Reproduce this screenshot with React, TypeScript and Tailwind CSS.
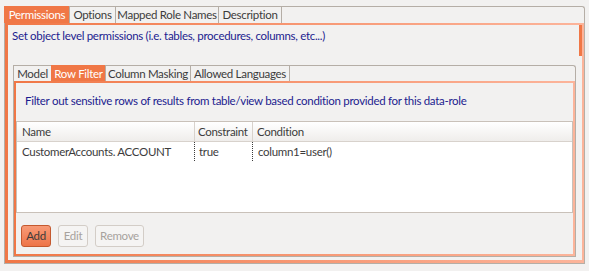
const font = { fontFamily: "Lato, 'Liberation Sans', sans-serif" };

const outerTabs = [
  { label: "Permissions", width: "w-[65px]", active: true },
  { label: "Options", width: "w-[46px]", active: false },
  { label: "Mapped Role Names", width: "w-[103px]", active: false },
  { label: "Description", width: "w-[63px]", active: false },
];

const innerTabs = [
  { label: "Model", width: "w-[38px]", active: false },
  { label: "Row Filter", width: "w-[54px]", active: true },
  { label: "Column Masking", width: "w-[85px]", active: false },
  { label: "Allowed Languages", width: "w-[99px]", active: false },
];

type Tab = { label: string; width: string; active: boolean };

function TabStrip({ tabs, height }: { tabs: Tab[]; height: string }) {
  return (
    <div className={`flex ${height}`}>
      {tabs.map((t) => (
        <div
          key={t.label}
          className={`${t.width} flex items-center justify-center whitespace-nowrap border-l border-t border-[#b5aea6] text-[11.5px] leading-none ${
            t.active ? "bg-[#f07746] text-white border-[#f07746]" : "text-[#3c3c3c]"
          }`}
        >
          {t.label}
        </div>
      ))}
      <div className="flex-1 rounded-tr-[3px] border-l border-r border-t border-[#b5aea6]" />
    </div>
  );
}

function OrangeFrame({ children, pad }: { children: React.ReactNode; pad: string }) {
  return (
    <div className="flex flex-1 flex-col border-b border-l border-r border-[#b5aea6]">
      <div className={`flex flex-1 flex-col bg-gradient-to-r from-[#f07746] to-[#fcb49a] ${pad}`}>
        <div className="flex flex-1 flex-col bg-[#f2f1f0]">{children}</div>
      </div>
    </div>
  );
}

export default function App() {
  return (
    <div className="h-[271px] w-[589px] bg-[#f2f1f0] pt-[6px] pl-[4px] text-[11.5px] tracking-[-0.3px]" style={font}>
      <div className="flex h-[258px] w-[581px] flex-col">
        <TabStrip tabs={outerTabs} height="h-[17px]" />
        <OrangeFrame pad="pl-[3px] pt-[2px] pr-[2px] pb-[3px]">
          <div className="flex flex-1">
            <div className="flex flex-1 flex-col">
              <div className="whitespace-nowrap pl-[4px] pt-[3px] leading-[15px] text-[#1c1c8f]">
                Set object level permissions (i.e. tables, procedures, columns, etc...)
              </div>
              <div className="ml-[5px] mt-[22px] flex h-[192px] w-[563px] flex-col">
                <TabStrip tabs={innerTabs} height="h-[16px]" />
                <OrangeFrame pad="pl-[2px] pt-[2px] pr-[2px] pb-[2px]">
                  <div className="whitespace-nowrap pl-[9px] pt-[10px] leading-[15px] text-[#1c1c8f]">
                    Filter out sensitive rows of results from table/view based condition provided for this data-role
                  </div>
                  <div className="mt-[13px] flex h-[92px] flex-col border border-[#c9c1b9] bg-white text-[#3c3c3c]">
                    <div className="flex h-[20px] border-b border-[#d8d2cc] bg-gradient-to-b from-white to-[#efedeb]">
                      <div className="flex w-[177px] items-center pl-[5px]">Name</div>
                      <div className="flex w-[58px] items-center border-l border-[#d8d2cc] pl-[3px]">Constraint</div>
                      <div className="flex flex-1 items-center border-l border-[#d8d2cc] pl-[4px]">Condition</div>
                    </div>
                    <div className="flex h-[19px]">
                      <div className="flex w-[177px] items-center pl-[5px]">CustomerAccounts. ACCOUNT</div>
                      <div className="flex w-[58px] items-center border-l border-dotted border-[#3c3c3c] pl-[4px]">true</div>
                      <div className="flex flex-1 items-center border-l border-dotted border-[#3c3c3c] pl-[5px]">column1=user()</div>
                    </div>
                  </div>
                  <div className="ml-[5px] mt-[12px] flex gap-[7px]">
                    <div className="flex h-[22px] w-[30px] items-center justify-center rounded-[3px] border border-[#c4592f] bg-gradient-to-b from-[#f79a76] to-[#ee7448] text-[#3c3c3c]">
                      Add
                    </div>
                    <div className="flex h-[22px] w-[30px] items-center justify-center rounded-[3px] border border-[#d3cdc7] bg-[#f5f4f3] text-[#a7a29d]">
                      Edit
                    </div>
                    <div className="flex h-[22px] w-[49px] items-center justify-center rounded-[3px] border border-[#d3cdc7] bg-[#f5f4f3] text-[#a7a29d]">
                      Remove
                    </div>
                  </div>
                </OrangeFrame>
              </div>
            </div>
            <div className="w-[3px]">
              <div className="h-[31px] bg-[#f07746]" />
            </div>
          </div>
        </OrangeFrame>
      </div>
    </div>
  );
}
